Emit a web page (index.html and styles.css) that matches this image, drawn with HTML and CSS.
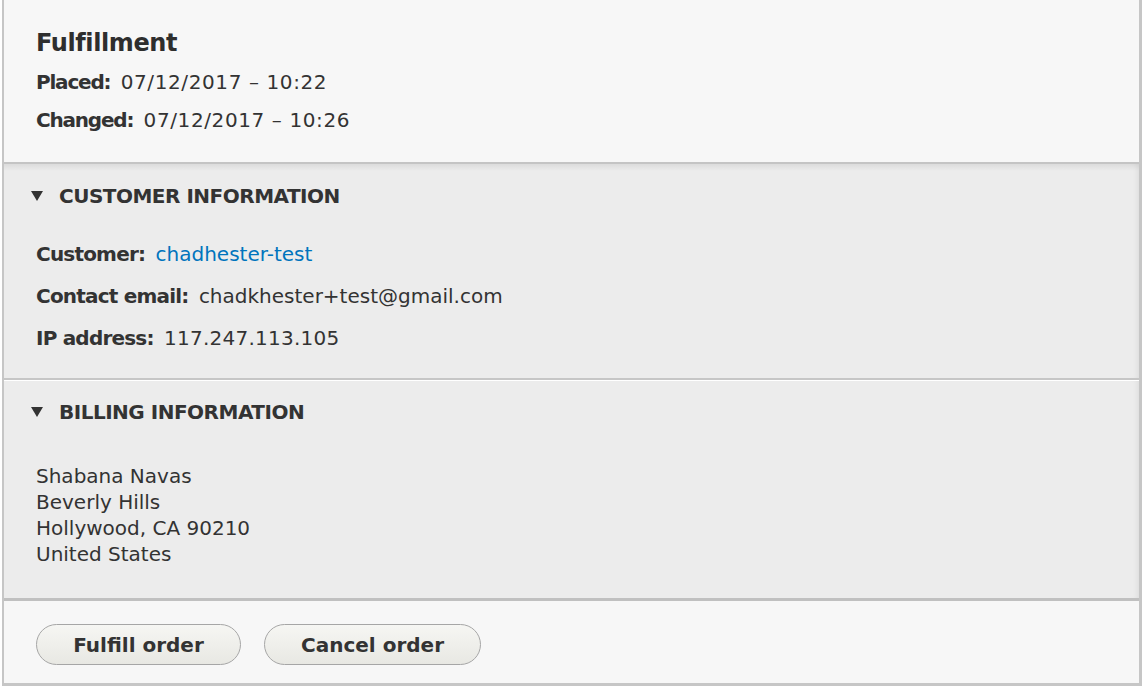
FILE: index.html
```html
<!DOCTYPE html>
<html>
<head>
<meta charset="utf-8">
<link rel="stylesheet" href="styles.css">
</head>
<body>
<div class="meta">
  <div class="meta-header">
    <h2 class="title">Fulfillment</h2>
    <div class="meta-row"><span class="label">Placed:</span> <span class="value date">07/12/2017 – 10:22</span></div>
    <div class="meta-row"><span class="label">Changed:</span> <span class="value date">07/12/2017 – 10:26</span></div>
  </div>
  <div class="section section-first">
    <div class="summary"><span class="arrow"></span>CUSTOMER INFORMATION</div>
    <div class="fields">
      <div class="field"><span class="label">Customer:</span> <a class="value link" href="#">chadhester-test</a></div>
      <div class="field"><span class="label">Contact email:</span> <span class="value">chadkhester+test@gmail.com</span></div>
      <div class="field"><span class="label">IP address:</span> <span class="value ip">117.247.113.105</span></div>
    </div>
  </div>
  <div class="section section-last">
    <div class="summary"><span class="arrow"></span>BILLING INFORMATION</div>
    <div class="address">
      <div class="value">Shabana Navas</div>
      <div class="value">Beverly Hills</div>
      <div class="value">Hollywood, CA 90210</div>
      <div class="value">United States</div>
    </div>
  </div>
  <div class="actions">
    <button class="btn btn-fulfill" type="button">Fulfill order</button>
    <button class="btn btn-cancel" type="button">Cancel order</button>
  </div>
</div>
</body>
</html>
```
FILE: styles.css
```css
html, body {
  margin: 0;
  padding: 0;
  background: #ffffff;
}
body {
  font-family: "DejaVu Sans", "Liberation Sans", sans-serif;
  color: #333333;
  font-size: 20px;
}
.meta {
  margin: 0 6px 0 2px;
  border-left: 2px solid #c6c6c6;
  border-right: 3px solid #c6c6c6;
  border-bottom: 3px solid #c6c6c6;
  height: 686px;
  box-sizing: border-box;
  display: flex;
  flex-direction: column;
}
.meta-header {
  background: #f7f7f7;
  padding: 28px 32px 23px;
  border-bottom: 2px solid #c4c4c4;
}
.title {
  margin: 0 0 5px;
  font-size: 24px;
  line-height: 30px;
  font-weight: bold;
  color: #2e2e2e;
  letter-spacing: -0.4px;
}
.meta-row {
  line-height: 38px;
}
.label {
  font-weight: bold;
  color: #333333;
  letter-spacing: -0.8px;
  margin-right: 4px;
}
.meta-row .label {
  letter-spacing: -1.2px;
}
.value {
  color: #333333;
}
.date {
  letter-spacing: 0.6px;
}
.ip {
  letter-spacing: 0.25px;
}
.link {
  color: #0074bd;
  text-decoration: none;
}
.section {
  background: #ececec;
  padding: 0 32px;
  box-shadow: inset -6px 0 6px -5px rgba(0, 0, 0, 0.08);
}
.section-first {
  padding-top: 17px;
  padding-bottom: 19px;
  border-bottom: 2px solid #c6c6c6;
  background-image: linear-gradient(to bottom, rgba(0, 0, 0, 0.07) 0, rgba(0, 0, 0, 0) 7px);
}
.section-last {
  border-top: 1px solid #ffffff;
  padding-top: 16px;
  padding-bottom: 31px;
  border-bottom: 3px solid #c0c0c0;
}
.summary {
  display: flex;
  align-items: center;
  line-height: 30px;
  font-weight: bold;
  color: #333333;
  margin-left: -5px;
  letter-spacing: -0.5px;
}
.arrow {
  width: 0;
  height: 0;
  border-left: 6.5px solid transparent;
  border-right: 6.5px solid transparent;
  border-top: 10px solid #333333;
  margin-right: 16px;
}
.fields {
  margin-top: 22px;
}
.field {
  line-height: 42px;
}
.address {
  margin-top: 36px;
  line-height: 26px;
}
.actions {
  flex: 1;
  background: #f7f7f7;
  padding: 23px 32px 0;
  display: flex;
  align-items: flex-start;
  gap: 23px;
}
.btn {
  font-family: "DejaVu Sans", "Liberation Sans", sans-serif;
  font-size: 20px;
  font-weight: bold;
  color: #333333;
  height: 41px;
  border: 1px solid #a6a6a6;
  border-radius: 21px;
  background: linear-gradient(to bottom, #f6f6f3 0, #e8e8e3 100%);
  padding: 0 35px;
  cursor: pointer;
}
.btn-fulfill {
  width: 205px;
}
.btn-cancel {
  width: 217px;
}
```
